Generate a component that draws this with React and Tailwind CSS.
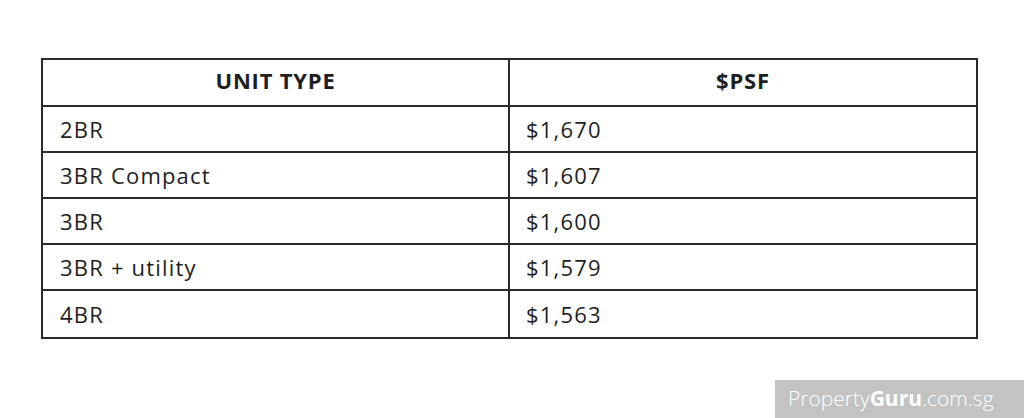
export default function App() {
  const rows = [
    ["2BR", "$1,670"],
    ["3BR Compact", "$1,607"],
    ["3BR", "$1,600"],
    ["3BR + utility", "$1,579"],
    ["4BR", "$1,563"],
  ];
  return (
    <div className="relative w-[1024px] h-[418px] bg-white overflow-hidden" style={{ fontFamily: '"Open Sans", sans-serif' }}>
      <div className="pt-[58px] pl-[41px]">
        <div className="w-[937px] border-2 border-[#2a2a2a] text-[#1e1e1e] text-[22px] tracking-[1.2px]">
          <div className="grid grid-cols-[467px_1fr] h-[47px] border-b-2 border-[#2a2a2a]">
            <div className="flex items-center justify-center pb-[4px] border-r-2 border-[#2a2a2a] font-bold tracking-[0.8px]">UNIT TYPE</div>
            <div className="flex items-center justify-center pb-[4px] font-bold tracking-[0.8px]">$PSF</div>
          </div>
          {rows.map((r, i) => (
            <div key={i} className={"grid grid-cols-[467px_1fr] h-[46px] " + (i < rows.length - 1 ? "border-b-2 border-[#2a2a2a]" : "")}>
              <div className="flex items-center pl-[17px] border-r-2 border-[#2a2a2a]">{r[0]}</div>
              <div className="flex items-center pl-[16px]">{r[1]}</div>
            </div>
          ))}
        </div>
      </div>
      <div className="absolute left-[775px] top-[380px] w-[249px] h-[38px] bg-[#c3c3c3] flex items-center pl-[13px] text-white text-[21px]" style={{ fontFamily: '"Open Sans", sans-serif' }}>
        <span className="font-light">Property</span>
        <span className="font-bold">Guru</span>
        <span className="font-light">.com.sg</span>
      </div>
    </div>
  );
}
